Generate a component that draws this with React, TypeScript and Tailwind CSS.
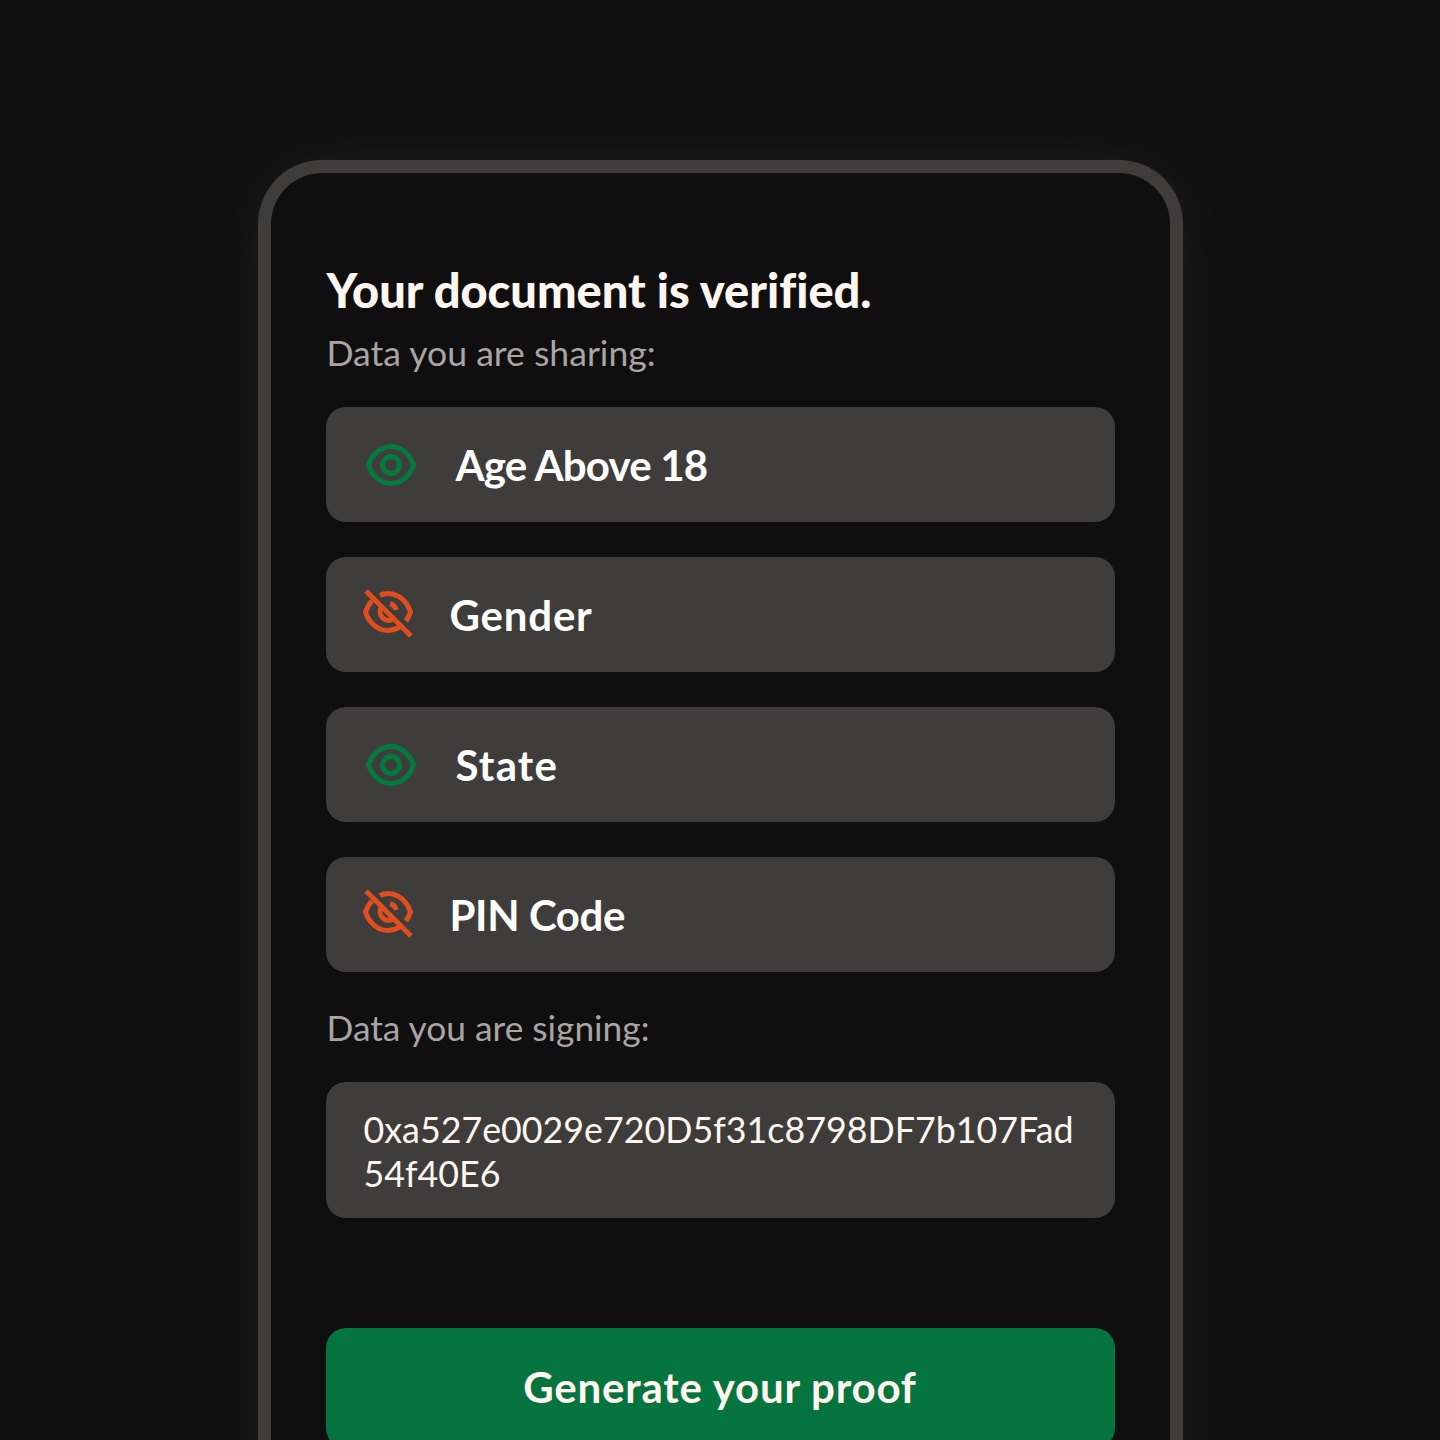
function EyeOpen() {
  return (
    <svg width="50" height="42" viewBox="0 0 50 42" fill="none" className="shrink-0">
      <path d="M2.5 21C6 10 15 2.5 25 2.5C35 2.5 44 10 47.5 21C44 32 35 39.5 25 39.5C15 39.5 6 32 2.5 21Z" stroke="#047A3E" strokeWidth="5" strokeLinejoin="round" />
      <circle cx="25" cy="21" r="8.5" stroke="#047A3E" strokeWidth="5" />
    </svg>
  )
}

function EyeOff() {
  return (
    <svg width="50" height="50" viewBox="0 0 50 50" fill="none" className="shrink-0">
      <path d="M17 5.5C19.5 4 22 3.5 25 3.5C35 3.5 44 11 47.5 22C46.5 25 45 28 43 31" stroke="#E04E1F" strokeWidth="5" />
      <path d="M9 11C6 14 4 18 2.5 22C6 33 15 40.5 25 40.5C29 40.5 33 39 36.5 37" stroke="#E04E1F" strokeWidth="5" />
      <path d="M18.5 17A8.5 8.5 0 0 0 30 29" stroke="#E04E1F" strokeWidth="5" />
      <path d="M27 13.8A8.5 8.5 0 0 1 33.3 20" stroke="#E04E1F" strokeWidth="5" />
      <path d="M3 1L48 46" stroke="#E04E1F" strokeWidth="5" />
    </svg>
  )
}

const rows = [
  { label: 'Age Above 18', shared: true, tracking: 'tracking-[-0.8px]' },
  { label: 'Gender', shared: false, tracking: 'tracking-[0.8px]' },
  { label: 'State', shared: true, tracking: 'tracking-[1.2px]' },
  { label: 'PIN Code', shared: false, tracking: 'tracking-[-0.4px]' },
]

export default function App() {
  return (
    <div className="h-[1440px] overflow-hidden bg-[#0f0f0f] pt-[160px] font-['Lato',sans-serif]">
      <div className="mx-auto h-[1400px] w-[925px] rounded-t-[64px] border-[13px] border-b-0 border-[#3e3d3b] bg-[#0f0f0f] px-[55px] pt-[89px] shadow-[0_0_60px_rgba(255,255,255,0.07)]">
        <h1 className="pl-[1px] text-[47px] leading-[56px] font-black tracking-[-0.02px] text-[#fff6f0]">Your document is verified.</h1>
        <p className="mt-[13px] pl-[1px] text-[35.6px] leading-[44px] text-[#aaa5a5]">Data you are sharing:</p>
        <div className="mt-[32px] flex flex-col gap-[35px]">
          {rows.map((row) => (
            <div key={row.label} className="flex h-[115px] items-center rounded-[20px] bg-[#3e3d3b]">
              {row.shared ? (
                <div className="ml-[40px] flex items-center gap-[40px]">
                  <EyeOpen />
                  <span className={`pt-[2px] text-[42px] font-bold text-white ${row.tracking}`}>{row.label}</span>
                </div>
              ) : (
                <div className="ml-[37px] flex items-center gap-[37px]">
                  <EyeOff />
                  <span className={`pt-[2px] text-[42px] font-bold text-white ${row.tracking}`}>{row.label}</span>
                </div>
              )}
            </div>
          ))}
        </div>
        <p className="mt-[34px] pl-[1px] text-[35.3px] leading-[44px] text-[#aaa5a5]">Data you are signing:</p>
        <div className="mt-[32px] flex h-[136px] items-center rounded-[20px] bg-[#3e3d3b] pt-[3px] pl-[38px] pr-[36px]">
          <p className="text-[35.8px] leading-[44px] break-all text-[#fff6f0]">0xa527e0029e720D5f31c8798DF7b107Fad54f40E6</p>
        </div>
        <button type="button" className="mt-[110px] h-[120px] w-full rounded-[20px] bg-[#06743e] pb-[2px] text-[42px] font-bold tracking-[0.8px] text-[#fff6f0]">
          Generate your proof
        </button>
      </div>
    </div>
  )
}
